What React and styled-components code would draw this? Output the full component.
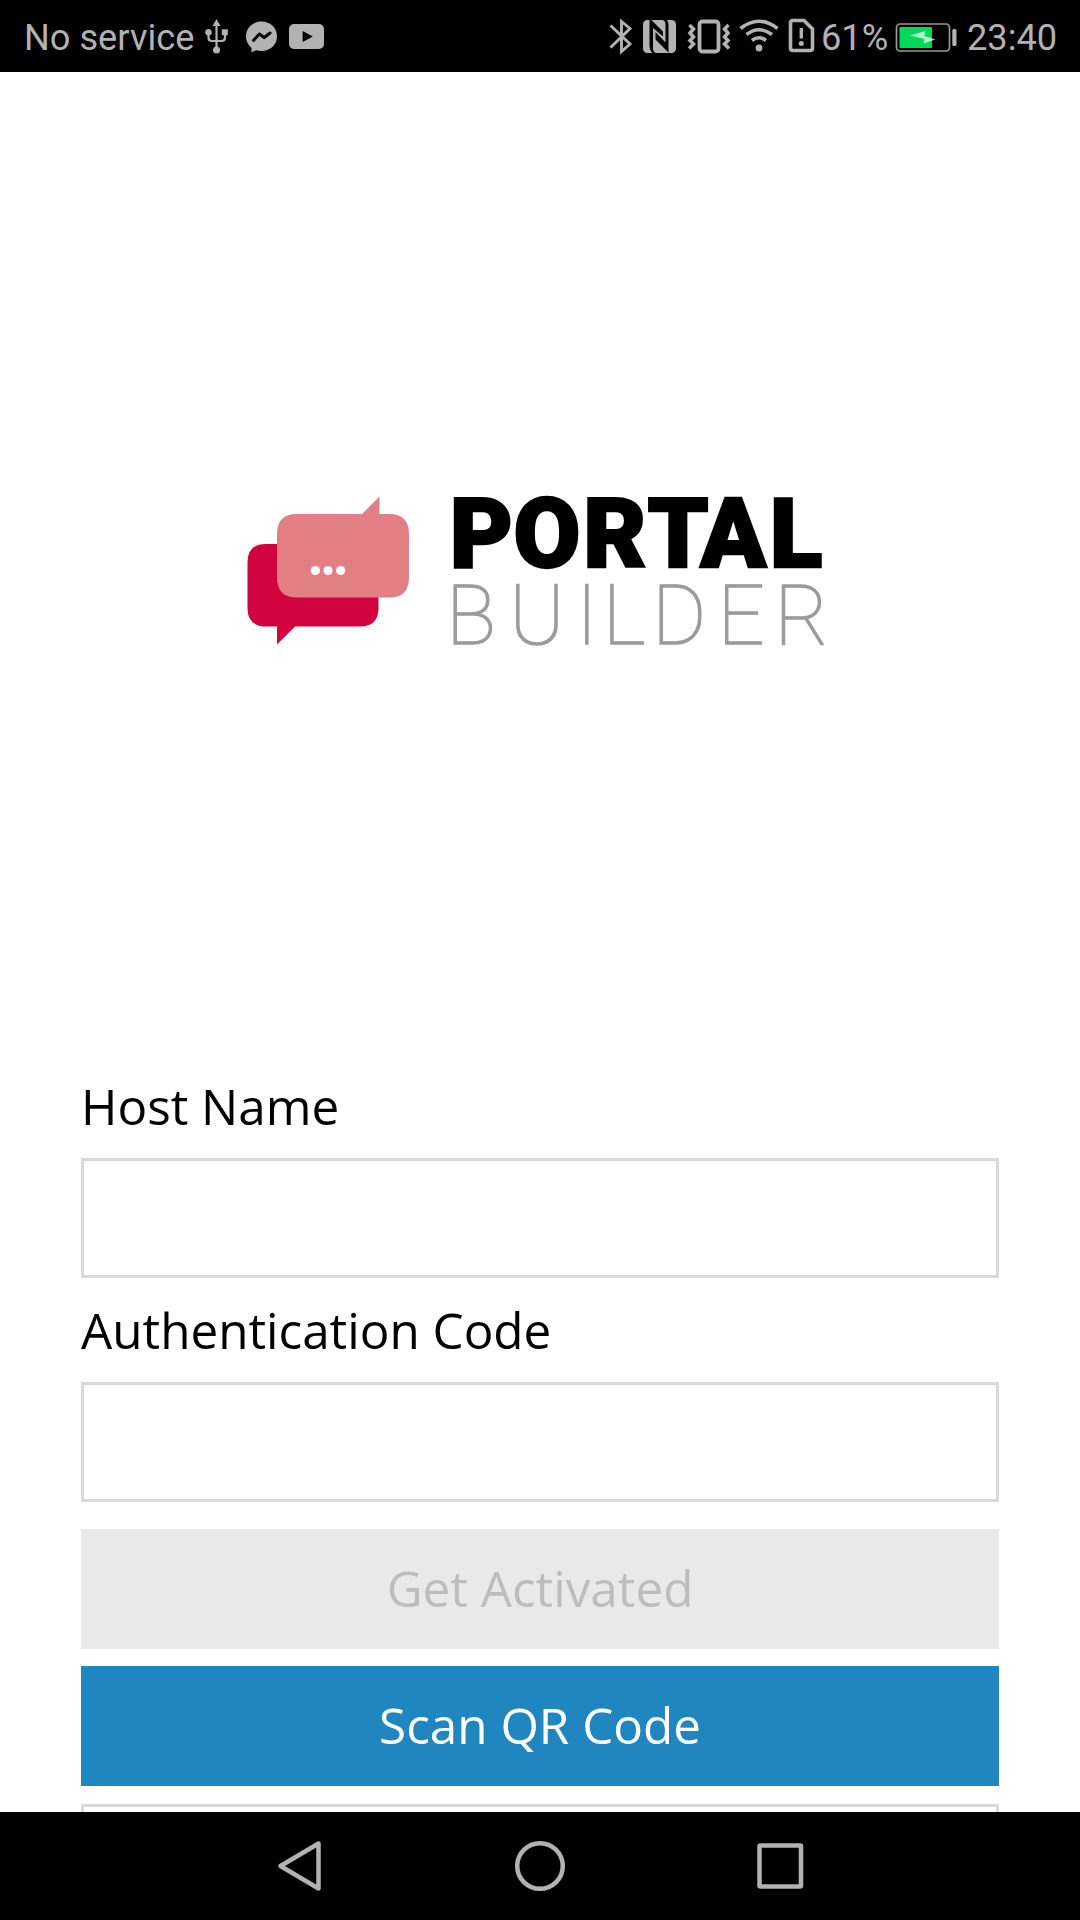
import React from "react";
import styled, { createGlobalStyle } from "styled-components";

const GlobalStyle = createGlobalStyle`
  *, *::before, *::after { box-sizing: border-box; }
  html, body { margin: 0; padding: 0; background: #fff; }
`;

const Screen = styled.div`
  display: flex;
  flex-direction: column;
  width: 1080px;
  height: 1920px;
  overflow: hidden;
  background: #ffffff;
  font-family: "Open Sans", "Noto Sans", sans-serif;
`;

const StatusBar = styled.header`
  display: flex;
  flex: none;
  justify-content: space-between;
  height: 72px;
  padding: 0 24px;
  background: #000;
  color: #b2b2b2;
`;

const StatusGroup = styled.div`
  display: flex;
  align-items: flex-start;
`;

const StatusText = styled.span`
  flex: none;
  width: ${(p) => p.$width}px;
  font: 400 36.2px/72px Roboto, sans-serif;
  padding-top: 2px;
  white-space: nowrap;
`;

const StatusSvg = styled.svg`
  flex: none;
  display: block;
  height: 72px;
  fill: none;
  stroke: none;
  color: #b2b2b2;
`;

const StatusIcon = ({ from, to, children }) => (
  <StatusSvg width={to - from} viewBox={`${from} 0 ${to - from} 72`}>
    {children}
  </StatusSvg>
);

const Content = styled.main`
  display: flex;
  flex: 1;
  min-height: 0;
  flex-direction: column;
  overflow: hidden;
`;

const Brand = styled.div`
  display: flex;
  flex: none;
  justify-content: center;
  height: 982px;
  padding-top: 408px;
`;

const BrandLogo = styled.svg`
  flex: none;
  display: block;
  width: 600px;
  height: 180px;
  overflow: visible;
`;

const WordHeavy = styled.text`
  font-family: Roboto, sans-serif;
  font-weight: 900;
  font-size: 97px;
  fill: #000;
  stroke: #000;
  stroke-width: 2.4px;
`;

const WordThin = styled.text`
  font-family: Roboto, sans-serif;
  font-weight: 100;
  font-size: 83px;
  fill: #9b9b9b;
  stroke: #9b9b9b;
  stroke-width: 1.3px;
`;

const Form = styled.form`
  display: flex;
  flex: none;
  flex-direction: column;
  padding: 0 81px;
`;

const Label = styled.label`
  height: 104px;
  font-size: 49.4px;
  line-height: 103px;
  color: #000;
  white-space: nowrap;
`;

const Field = styled.input`
  display: block;
  width: 100%;
  height: 120px;
  margin: 0;
  padding: 0 24px;
  border: 3px solid #d9d9d9;
  border-radius: 0;
  background: #fff;
  font: inherit;
  font-size: 49.4px;
  outline: none;
`;

const Button = styled.button`
  height: 120px;
  margin: ${(p) => p.$gap}px 0 0;
  padding: 0 0 2px;
  border: ${(p) => (p.$outlined ? "3px solid #d9d9d9" : "0")};
  background: ${(p) => p.$bg};
  color: ${(p) => p.$color};
  font-family: inherit;
  font-size: 49.4px;
  line-height: 118px;
`;

const NavBar = styled.nav`
  display: flex;
  flex: none;
  justify-content: center;
  gap: 140px;
  height: 108px;
  background: #000;
`;

const NavIcon = styled.svg`
  display: block;
  width: 100px;
  height: 108px;
  fill: none;
  stroke: #b2b2b2;
  stroke-width: 4.5;
  stroke-linejoin: round;
`;

const G = "#b2b2b2";

function Logo() {
  return (
    <BrandLogo viewBox="240 480 600 180">
      <path
        fill="#d00340"
        d="M265.500 544H360q18.500 0 18.500 18.500V608q0 18.500-18.500 18.500H295L277 644.500V626.500H266q-18.500 0-18.500-18.500V562.500q0-18.500 18-18.500Z"
      />
      <path
        fill="#e27f82"
        d="M297 514H362L379.500 496.500V514H389q20 0 20 20V577.500q0 20-20 20H297q-20 0-20-20V534q0-20 20-20Z"
      />
      <circle cx="315.300" cy="570.500" r="4.600" fill="#fff" />
      <circle cx="328" cy="570.500" r="4.600" fill="#fff" />
      <circle cx="340.700" cy="570.500" r="4.600" fill="#fff" />
      <WordHeavy x="449.800 513.500 583.300 647.500 700.300 769.800" y="567">PORTAL</WordHeavy>
      <WordThin x="446 509.300 576 602.800 652 717.500 774.500" y="644.200">BUILDER</WordThin>
    </BrandLogo>
  );
}

export default function App() {
  return (
    <>
      <GlobalStyle />
      <Screen>
        <StatusBar>
          <StatusGroup>
            <StatusText $width={178}>No service</StatusText>
            <StatusIcon from={202} to={240}>
              <path
                d="M216.500 24V49M208.500 33v4.500q0 3.500 3.500 3.500h9.500q3.500 0 3.500-3.500V33"
                stroke={G}
                strokeWidth="2.200"
              />
              <path d="M216.500 19l4 7h-8Z" fill={G} />
              <circle cx="208.500" cy="32.300" r="3.200" fill={G} />
              <rect x="221.800" y="29.300" width="6" height="6" fill={G} />
              <circle cx="216.500" cy="50" r="3.500" fill={G} />
            </StatusIcon>
            <StatusIcon from={240} to={284}>
              <path
                d="M261.500 21.500C252.500 21.500 246 28 246 36.500C246 41 248 45 251.500 48V52.500L256 50.300Q258.500 51 261.500 51C270.500 51 277 44.500 277 36.500C277 28 270.500 21.500 261.500 21.500Z"
                fill={G}
              />
              <path
                d="M253.500 40.500L259.300 34L264.300 37.500L270 33"
                stroke="#000"
                strokeWidth="3"
                strokeLinecap="round"
                strokeLinejoin="round"
              />
            </StatusIcon>
            <StatusIcon from={284} to={328}>
              <rect x="289" y="24" width="35" height="25" rx="5" fill={G} />
              <path d="M302.700 31L312.800 36.500L302.700 42Z" fill="#000" />
            </StatusIcon>
          </StatusGroup>
          <StatusGroup>
            <StatusIcon from={604} to={638}>
              <path
                d="M610.500 25.500L630 44L621.500 51.500V21.500L630 28.500L610.500 47.500"
                stroke={G}
                strokeWidth="2.900"
              />
            </StatusIcon>
            <StatusIcon from={638} to={682}>
              <rect x="643" y="20" width="33" height="33" rx="4.500" fill={G} />
              <path
                d="M649.500 20H651.500L665 33.500V25Q665 21.500 663 20H667Q668.500 22 668.500 26V52.500L654 38V48Q654 51.500 656 53H652.500Q649.500 50 649.500 45Z"
                fill="#000"
              />
              <path
                d="M653 28V49Q653 53 658 53H667L655.500 41V32L665.500 42.500V24Q665.500 20 660.500 20H652.500L663 30.500V36.500Z"
                fill={G}
              />
            </StatusIcon>
            <StatusIcon from={682} to={735}>
              <rect x="699.500" y="21.500" width="19" height="30" rx="3" stroke={G} strokeWidth="3.800" />
              <path
                d="M689.500 25l4 4l-3.500 4l3.500 4l-3.500 3.500l3.500 3.500l-4.500 4.500M728.500 25l-4 4l3.500 4l-3.500 4l3.500 3.500l-3.500 3.500l4.500 4.500"
                stroke={G}
                strokeWidth="3.500"
              />
            </StatusIcon>
            <StatusIcon from={735} to={785}>
              <path
                d="M740.500 28.500Q759 14 777.500 28.500M746.500 34.500Q759 25 772 34.500M752 40.500Q759 35 766 40.500"
                stroke={G}
                strokeWidth="3.600"
              />
              <circle cx="759" cy="48" r="3.400" fill={G} />
            </StatusIcon>
            <StatusIcon from={785} to={821}>
              <path
                d="M792 20.500H804L812.500 29V48Q812.500 50.500 810 50.500H793Q790.500 50.500 790.500 48V23Q790.500 20.500 793 20.500Z"
                stroke={G}
                strokeWidth="3.600"
              />
              <path d="M801.300 28V38.500" stroke={G} strokeWidth="3.400" />
              <circle cx="801.300" cy="43.500" r="2.500" fill={G} />
            </StatusIcon>
            <StatusText $width={72}>61%</StatusText>
            <StatusIcon from={893} to={967}>
              <rect x="896.500" y="24" width="53" height="27" rx="3.500" stroke="#969696" strokeWidth="1.700" />
              <rect x="899.500" y="27" width="32.500" height="21" rx="1" fill="#00d957" />
              <path d="M910 35.500L925.500 31L924.500 36L935.500 39.500L923.500 43.500L924.500 39Z" fill="#fff" opacity=".7" />
              <rect x="952.300" y="29" width="4.200" height="17" rx="1.500" fill={G} />
            </StatusIcon>
            <StatusText $width={89}>23:40</StatusText>
          </StatusGroup>
        </StatusBar>
        <Content>
          <Brand>
            <Logo />
          </Brand>
          <Form onSubmit={(e) => e.preventDefault()}>
            <Label htmlFor="host">Host Name</Label>
            <Field id="host" type="text" />
            <Label htmlFor="code">Authentication Code</Label>
            <Field id="code" type="text" />
            <Button type="submit" disabled $gap={27} $bg="#e9e9e9" $color="#bdbdbd">
              Get Activated
            </Button>
            <Button type="button" $gap={17} $bg="#2086c0" $color="#fff">
              Scan QR Code
            </Button>
            <Button type="button" $gap={18} $bg="#fff" $color="#000" $outlined />
          </Form>
        </Content>
        <NavBar>
          <NavIcon viewBox="250 1812 100 108">
            <path d="M318.500 1843.500V1888.500L280.500 1866Z" />
          </NavIcon>
          <NavIcon viewBox="490 1812 100 108">
            <circle cx="540" cy="1866" r="22.800" />
          </NavIcon>
          <NavIcon viewBox="730 1812 100 108">
            <rect x="759.500" y="1845.500" width="41.500" height="41" rx="1" />
          </NavIcon>
        </NavBar>
      </Screen>
    </>
  );
}
